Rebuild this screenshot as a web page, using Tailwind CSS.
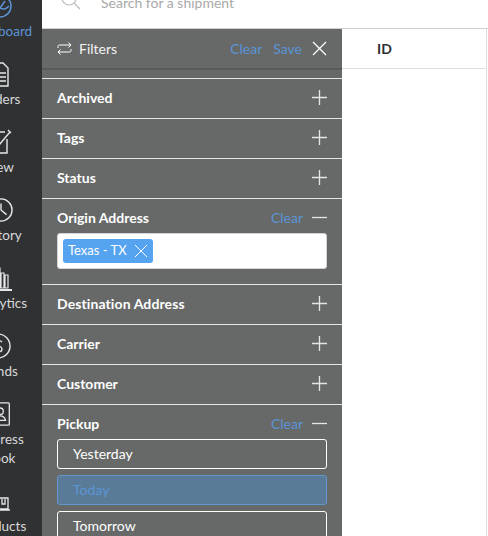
<!doctype html>
<html><head><meta charset="utf-8"><script src="https://cdn.jsdelivr.net/npm/@tailwindcss/browser@4"></script></head>
<body class="m-0 overflow-hidden bg-white">
<div class="flex w-[488px] h-[536px] overflow-hidden font-['Lato','Liberation_Sans',sans-serif]">
  <!-- sidebar -->
  <aside class="w-[42px] h-full shrink-0 overflow-hidden bg-[#303133]">
    <div class="w-[100px] -ml-[50px] -mt-[12px] flex flex-col items-center text-[13.500px] leading-[19px] text-[#d8d9da]">
      <div class="h-[68px] w-full flex flex-col items-center text-[#5b94d6]">
        <svg class="mt-[8px] h-[24px] w-[24px]" viewBox="0 0 24 24" fill="none" stroke="#5b94d6" stroke-width="1.5"><circle cx="12" cy="10" r="11"/><path d="M3 15c4-3 5-5 9-3s6 1 9-2M12 12l5-7"/></svg>
        <span class="mt-[2px]">Dashboard</span>
      </div>
      <div class="h-[68px] w-full flex flex-col items-center">
        <svg class="ml-[1px] h-[25px] w-[18px] mt-[6px]" viewBox="0 0 18 25" fill="none" stroke="#e6e7e8" stroke-width="1.4"><path d="M2 4h4V1h5l5 5v18H2zM4 11h10M4 15h10M4 19h10"/></svg>
        <span class="mt-[3px]">Orders</span>
      </div>
      <div class="h-[68px] w-full flex flex-col items-center">
        <svg class="ml-[4px] h-[25px] w-[20px] mt-[5px]" viewBox="0 0 20 25" fill="none" stroke="#e6e7e8" stroke-width="1.4"><path d="M13 3H1v21h14V10M7 16 18 3M16 1l3 3"/></svg>
        <span class="mt-[4px]">New</span>
      </div>
      <div class="h-[68px] w-full flex flex-col items-center">
        <svg class="ml-[2px] h-[24px] w-[24px] mt-[6px]" viewBox="0 0 26 26" fill="none" stroke="#e6e7e8" stroke-width="1.5"><circle cx="13" cy="13" r="12"/><path d="M13 6v7l6 5"/></svg>
        <span class="mt-[4px]">History</span>
      </div>
      <div class="h-[68px] w-full flex flex-col items-center">
        <svg class="ml-[8px] h-[24px] w-[24px] mt-[7px]" viewBox="0 0 24 24" fill="none" stroke="#e6e7e8" stroke-width="1.2"><path d="M1 6h3v15H1zM5 1h3v20H5zM9 6h3v15H9zM13 8h3v13h-3z"/><path d="M0 23h20" stroke-width="2"/></svg>
        <span class="mt-[3px]">Analytics</span>
      </div>
      <div class="h-[68px] w-full flex flex-col items-center">
        <svg class="-ml-[4px] h-[26px] w-[26px] mt-[5px]" viewBox="0 0 26 26" fill="none" stroke="#e6e7e8" stroke-width="1.4"><circle cx="13" cy="13" r="12"/><path d="M17 9c-2-2-8-2-8 1s8 2 8 6-6 3-8 1M13 5v16"/></svg>
        <span class="mt-[3px]">Funds</span>
      </div>
      <div class="h-[87px] w-full flex flex-col items-center">
        <svg class="ml-[2px] h-[24px] w-[24px] mt-[6px]" viewBox="0 0 24 26" fill="none" stroke="#e6e7e8" stroke-width="1.4"><path d="M2 1h18a1 1 0 0 1 1 1v22a1 1 0 0 1-1 1H2z"/><circle cx="11" cy="10" r="3.500"/><path d="M5 20c1-4 3-5 6-5s5 1 6 5z"/></svg>
        <span class="mt-[4px] w-[70px] text-center">Address Book</span>
      </div>
      <div class="w-full flex flex-col items-center">
        <svg class="-ml-[2px] h-[25px] w-[24px] mt-[4px]" viewBox="0 0 24 25" fill="none" stroke="#e6e7e8" stroke-width="1.3"><path d="M3 1h8v8H3zM3 9h8v13H3zM11 11h10v11H11zM15 12v5h3v-5M1 23h22"/></svg>
        <span class="mt-[5px]">Products</span>
      </div>
    </div>
  </aside>
  <div class="flex-1 min-w-0 flex flex-col">
    <!-- search -->
    <header class="h-[29px] shrink-0 border-b border-[#cfcfcf] overflow-hidden flex items-start bg-white pl-[19px] pr-0">
      <svg class="-mt-[10px] h-[20px] w-[20px] shrink-0" viewBox="0 0 20 20" fill="none" stroke="#bcbcbc" stroke-width="1.2"><circle cx="8" cy="8" r="7"/><path d="m13 13 6 6"/></svg>
      <span class="-mt-[7px] ml-[20px] text-[14px] leading-[20px] text-[#a9a9a9]">Search for a shipment</span>
    </header>
    <div class="flex flex-1 min-h-0">
      <!-- filters -->
      <section class="w-[300px] shrink-0 bg-[#666968] text-white">
        <div class="h-[41px] flex items-center px-[15px] pb-[1px] border-b-2 border-[#58595a] text-[14px]">
          <svg class="h-[15px] w-[15px] mr-[7px]" viewBox="0 0 15 15" fill="none" stroke="#fff" stroke-width="1"><path d="M1 7V5.500A1.500 1.500 0 0 1 2.500 4H14M11.500 1.500 14 4l-2.500 2.500M14 8v1.500a1.500 1.500 0 0 1-1.500 1.500H1M3.500 8.500 1 11l2.500 2.500"/></svg>
          <span class="text-[#f2f2f2]">Filters</span>
          <span class="ml-auto text-[#5b94d6]">Clear</span>
          <span class="ml-[11px] text-[#5b94d6]">Save</span>
          <svg class="ml-[10px] h-[15px] w-[15px]" viewBox="0 0 15 15" stroke="#fff" stroke-width="1.300"><path d="m1 1 13 13M14 1 1 14"/></svg>
        </div>
        <div class="h-[9px] border-b border-[#e6e6e6]"></div>
        <div class="h-[40px] flex items-center justify-between px-[15px] pb-[2px] border-b border-[#e6e6e6] text-[14px] font-bold"><span>Archived</span><svg class="h-[15px] w-[15px]" viewBox="0 0 15 15" stroke="#e6e6e6" stroke-width="1.300"><path d="M0 7.500h15M7.500 0v15"/></svg></div>
        <div class="h-[40px] flex items-center justify-between px-[15px] pb-[2px] border-b border-[#e6e6e6] text-[14px] font-bold"><span>Tags</span><svg class="h-[15px] w-[15px]" viewBox="0 0 15 15" stroke="#e6e6e6" stroke-width="1.300"><path d="M0 7.500h15M7.500 0v15"/></svg></div>
        <div class="h-[40px] flex items-center justify-between px-[15px] pb-[2px] border-b border-[#e6e6e6] text-[14px] font-bold"><span>Status</span><svg class="h-[15px] w-[15px]" viewBox="0 0 15 15" stroke="#e6e6e6" stroke-width="1.300"><path d="M0 7.500h15M7.500 0v15"/></svg></div>
        <div class="h-[86px] px-[15px] border-b border-[#e6e6e6] pt-[8px]">
          <div class="h-[20px] flex items-center text-[14px] font-bold"><span>Origin Address</span><span class="ml-auto font-normal text-[#5b94d6]">Clear</span><svg class="ml-[9px] h-[15px] w-[15px]" viewBox="0 0 15 15" stroke="#e6e6e6" stroke-width="1.300"><path d="M0 7.500h15"/></svg></div>
          <div class="mt-[6px] h-[36px] w-[270px] bg-white rounded-[3px] border border-[#d5d5d5] flex items-center pl-[5px]">
            <span class="h-[24px] w-[90px] rounded-[3px] bg-[#56a3f0] text-white text-[13px] flex items-center pl-[5px] gap-[8px]">Texas - TX<svg class="h-[12px] w-[12px]" viewBox="0 0 12 12" stroke="#fff" stroke-width="1"><path d="m0 0 12 12M12 0 0 12"/></svg></span>
          </div>
        </div>
        <div class="h-[40px] flex items-center justify-between px-[15px] pb-[2px] border-b border-[#e6e6e6] text-[14px] font-bold"><span class="tracking-[0.1px]">Destination Address</span><svg class="h-[15px] w-[15px]" viewBox="0 0 15 15" stroke="#e6e6e6" stroke-width="1.300"><path d="M0 7.500h15M7.500 0v15"/></svg></div>
        <div class="h-[40px] flex items-center justify-between px-[15px] pb-[2px] border-b border-[#e6e6e6] text-[14px] font-bold"><span>Carrier</span><svg class="h-[15px] w-[15px]" viewBox="0 0 15 15" stroke="#e6e6e6" stroke-width="1.300"><path d="M0 7.500h15M7.500 0v15"/></svg></div>
        <div class="h-[40px] flex items-center justify-between px-[15px] pb-[2px] border-b border-[#e6e6e6] text-[14px] font-bold"><span>Customer</span><svg class="h-[15px] w-[15px]" viewBox="0 0 15 15" stroke="#e6e6e6" stroke-width="1.300"><path d="M0 7.500h15M7.500 0v15"/></svg></div>
        <div class="px-[15px] pt-[8px]">
          <div class="h-[20px] flex items-center text-[14px] font-bold"><span>Pickup</span><span class="ml-auto font-normal text-[#5b94d6]">Clear</span><svg class="ml-[9px] h-[15px] w-[15px]" viewBox="0 0 15 15" stroke="#e6e6e6" stroke-width="1.300"><path d="M0 7.500h15"/></svg></div>
          <div class="mt-[6px] flex flex-col gap-[6px] text-[14px]">
            <div class="h-[30px] w-[270px] rounded-[3px] border border-white flex items-center pl-[15px] pb-[2px]">Yesterday</div>
            <div class="h-[30px] w-[270px] rounded-[3px] border border-[#6497d0] bg-[#5a7b97] text-[#5b94d6] flex items-center pl-[15px] pb-[2px]">Today</div>
            <div class="h-[30px] w-[270px] rounded-[3px] border border-white flex items-center pl-[15px] pb-[2px]">Tomorrow</div>
          </div>
        </div>
      </section>
      <!-- table -->
      <main class="flex-1 min-w-0 pr-[1px]">
        <div class="h-full w-[145px] border-r border-[#dedede]">
          <div class="h-[40px] border-b border-[#dedede] pl-[35px] flex items-center text-[14px] font-bold text-[#2c2f33]">ID</div>
        </div>
      </main>
    </div>
  </div>
</div>
</body></html>
